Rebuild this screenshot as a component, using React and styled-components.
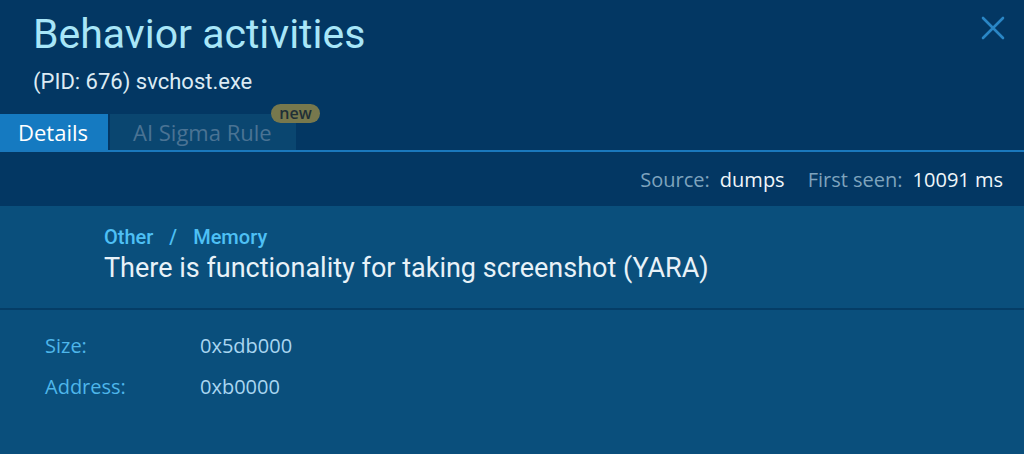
import React from "react";
import styled, { createGlobalStyle } from "styled-components";

const GlobalStyle = createGlobalStyle`
  html, body {
    margin: 0;
    padding: 0;
    background: #0a4f7c;
  }
  body {
    font-family: Roboto, "Liberation Sans", sans-serif;
  }
`;

export default function App() {
  return (
    <>
      <GlobalStyle />
      <Panel>
        <Header>
          <TitleRow>
            <div>
              <Title>Behavior activities</Title>
              <Subtitle>(PID: 676) svchost.exe</Subtitle>
            </div>
            <CloseButton aria-label="Close">
              <svg width="24" height="24" viewBox="0 0 24 24">
                <path d="M2 2 L22 22 M22 2 L2 22" stroke="#2a86c5" strokeWidth="2.6" strokeLinecap="round" />
              </svg>
            </CloseButton>
          </TitleRow>
          <Tabs>
            <Tab active>Details</Tab>
            <Tab>
              AI Sigma Rule
              <Badge>new</Badge>
            </Tab>
          </Tabs>
          <Meta>
            <MetaLabel>Source:</MetaLabel>
            <MetaValue>dumps</MetaValue>
            <MetaLabel>First seen:</MetaLabel>
            <MetaValue>10091 ms</MetaValue>
          </Meta>
        </Header>
        <Summary>
          <Breadcrumb>
            <span>Other</span>
            <Slash>/</Slash>
            <span>Memory</span>
          </Breadcrumb>
          <Description>There is functionality for taking screenshot (YARA)</Description>
        </Summary>
        <Details>
          <DetailRow>
            <DetailLabel>Size:</DetailLabel>
            <DetailValue>0x5db000</DetailValue>
          </DetailRow>
          <DetailRow>
            <DetailLabel>Address:</DetailLabel>
            <DetailValue>0xb0000</DetailValue>
          </DetailRow>
        </Details>
      </Panel>
    </>
  );
}

const Panel = styled.div`
  width: 1024px;
  height: 454px;
  background: #0a4f7c;
  overflow: hidden;
`;
const Header = styled.div`
  background: #033763;
`;
const TitleRow = styled.div`
  display: flex;
  justify-content: space-between;
  padding: 10px 18px 0 33px;
`;
const Title = styled.h1`
  margin: 0;
  font-family: Roboto, sans-serif;
  font-weight: 400;
  font-size: 41px;
  line-height: 48px;
  color: #a8e6f8;
`;
const Subtitle = styled.div`
  margin-top: 11px;
  font-family: Roboto, sans-serif;
  font-size: 22px;
  line-height: 26px;
  color: #dcebf4;
`;
const CloseButton = styled.button`
  background: none;
  border: 0;
  padding: 0;
  margin-top: 5px;
  width: 26px;
  height: 26px;
  display: flex;
  align-items: center;
  justify-content: center;
  cursor: pointer;
`;
const Tabs = styled.div`
  display: flex;
  align-items: flex-end;
  gap: 2px;
  margin-top: 19px;
  border-bottom: 2px solid #1a78bd;
`;
const Tab = styled.div`
  position: relative;
  width: ${(p) => (p.active ? "108px" : "186px")};
  height: 36px;
  display: flex;
  align-items: center;
  padding-left: ${(p) => (p.active ? "18px" : "23px")};
  box-sizing: border-box;
  font-family: "Open Sans", "Noto Sans", sans-serif;
  font-size: 22px;
  color: ${(p) => (p.active ? "#ffffff" : "#4a7394")};
  background: ${(p) => (p.active ? "#157ac1" : "#0a4670")};
`;
const Badge = styled.span`
  position: absolute;
  top: -10px;
  right: -24px;
  width: 49px;
  height: 19px;
  line-height: 18px;
  text-align: center;
  border-radius: 10px;
  background: #77784d;
  color: #1f2f36;
  font-family: "Open Sans", "Noto Sans", sans-serif;
  font-size: 16px;
  font-weight: 600;
`;
const Meta = styled.div`
  display: flex;
  justify-content: flex-end;
  align-items: center;
  height: 54px;
  padding-right: 21px;
  font-family: "Open Sans", "Noto Sans", sans-serif;
  font-size: 20px;
`;
const MetaLabel = styled.span`
  color: #7ea3bd;
  margin-right: 10px;
  &:not(:first-child) {
    margin-left: 23px;
  }
`;
const MetaValue = styled.span`
  color: #f0f6fa;
`;
const Summary = styled.div`
  padding: 19px 104px 24px;
  border-bottom: 2px solid #053d66;
`;
const Breadcrumb = styled.div`
  font-family: Roboto, sans-serif;
  font-weight: 500;
  font-size: 20px;
  line-height: 24px;
  color: #4ec0f5;
`;
const Slash = styled.span`
  margin: 0 16px;
`;
const Description = styled.div`
  margin-top: 3px;
  font-family: Roboto, sans-serif;
  font-size: 27px;
  line-height: 32px;
  color: #e8f2f8;
`;
const Details = styled.div`
  padding: 24px 45px;
  display: flex;
  flex-direction: column;
  gap: 17px;
`;
const DetailRow = styled.div`
  display: grid;
  grid-template-columns: 155px 1fr;
  font-family: "Open Sans", "Noto Sans", sans-serif;
  font-size: 20px;
  line-height: 24px;
`;
const DetailLabel = styled.span`
  color: #4eb6ea;
`;
const DetailValue = styled.span`
  color: #a9d6f1;
`;
